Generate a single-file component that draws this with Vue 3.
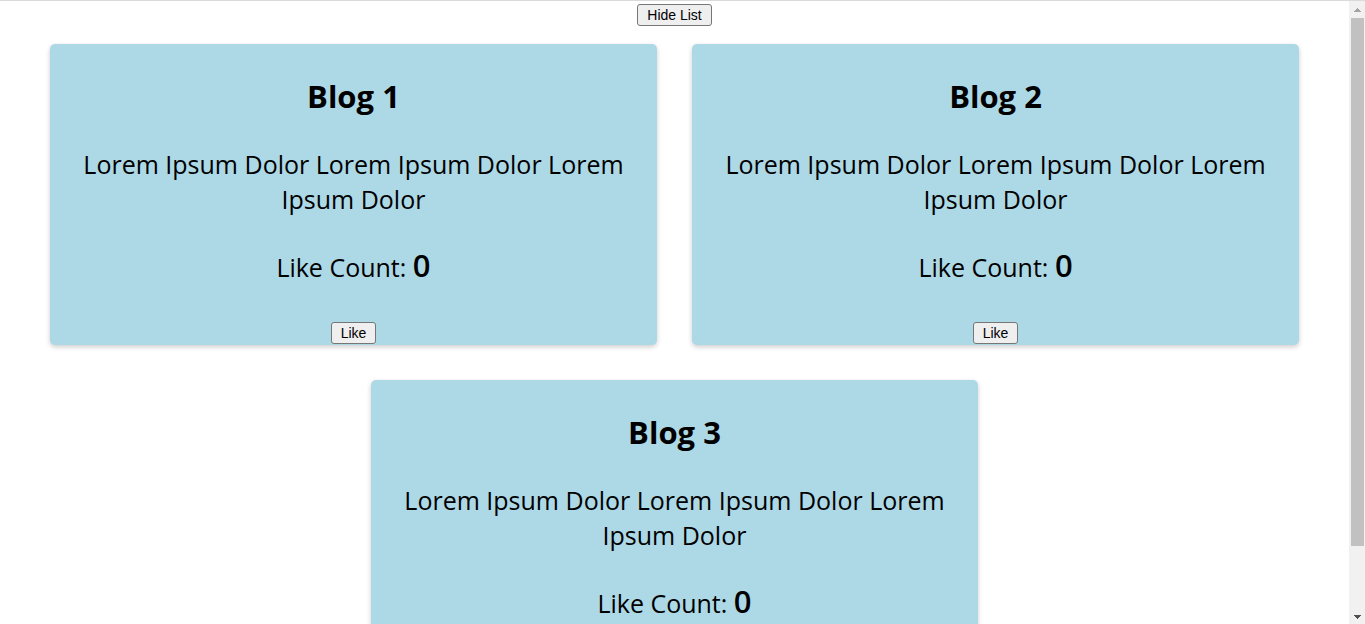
<script setup>
import { ref } from 'vue'

const showList = ref(true)
const text = 'Lorem Ipsum Dolor Lorem Ipsum Dolor Lorem Ipsum Dolor'
const blogs = ref([
  { id: 1, title: 'Blog 1', text, likes: 0 },
  { id: 2, title: 'Blog 2', text, likes: 0 },
  { id: 3, title: 'Blog 3', text, likes: 0 },
])
</script>

<template>
  <div class="window">
    <main class="page">
      <button class="btn" type="button" @click="showList = !showList">
        {{ showList ? 'Hide List' : 'Show List' }}
      </button>
      <section v-if="showList" class="list">
        <article v-for="blog in blogs" :key="blog.id" class="card">
          <h3 class="title">{{ blog.title }}</h3>
          <p class="text">{{ blog.text }}</p>
          <p class="text count">Like Count: <span class="number">{{ blog.likes }}</span></p>
          <button class="btn" type="button" @click="blog.likes++">Like</button>
        </article>
      </section>
    </main>
    <div class="scrollbar" aria-hidden="true">
      <svg class="arrow" viewBox="0 0 16 17"><path d="M8 7h1v1h1v1h1v1h1v1H5v-1h1v-1h1V8h1z" fill="#a3a3a3" /></svg>
      <div class="track"><div class="thumb"></div></div>
      <svg class="arrow" viewBox="0 0 16 17"><path d="M5 8h7v1h-1v1h-1v1H9v1H8v-1H7v-1H6V9H5z" fill="#505050" /></svg>
    </div>
  </div>
</template>

<style>
body {
  margin: 0;
  background: #fff;
}
</style>

<style scoped>
.window {
  display: flex;
  box-sizing: border-box;
  height: 100vh;
  overflow: hidden;
  border-top: 1px solid #dadada;
  color: #000;
  font-family: "Segoe UI", "Open Sans", "Noto Sans", sans-serif;
}

.page {
  flex: 1;
  min-width: 0;
  padding-top: 3px;
  text-align: center;
}

.btn {
  display: block;
  box-sizing: border-box;
  height: 22px;
  margin: 0 auto;
  padding: 0 9px;
  border: 1px solid #767676;
  border-radius: 3px;
  background: #efefef;
  color: #000;
  font-family: Arial, "Liberation Sans", sans-serif;
  font-size: 14px;
  line-height: 20px;
}

.list {
  display: flex;
  flex-wrap: wrap;
  justify-content: center;
  gap: 35px;
  padding: 18px 0 35px;
}

.card {
  box-sizing: border-box;
  width: 45%;
  padding-bottom: 1px;
  border-radius: 5px;
  background: lightblue;
  box-shadow: 0 2px 5px rgba(0, 0, 0, 0.2);
}

.title {
  margin: 31px 0 30px;
  font-size: 31px;
  font-weight: 700;
  line-height: 42px;
}

.text {
  margin: 0;
  padding: 0 32px;
  font-size: 25px;
  font-weight: 400;
  line-height: 35px;
}

.count {
  margin: 30px 0 35px;
  line-height: 40px;
}

.number {
  font-size: 31px;
  font-weight: 600;
  line-height: 1;
}

.scrollbar {
  display: flex;
  flex-direction: column;
  width: 16px;
  background: #f1f1f1;
}

.arrow {
  display: block;
  width: 16px;
  height: 17px;
}

.track {
  flex: 1;
  padding: 0 1px 0 2px;
}

.thumb {
  height: calc(90% - 2px);
  background: #c1c1c1;
}
</style>
